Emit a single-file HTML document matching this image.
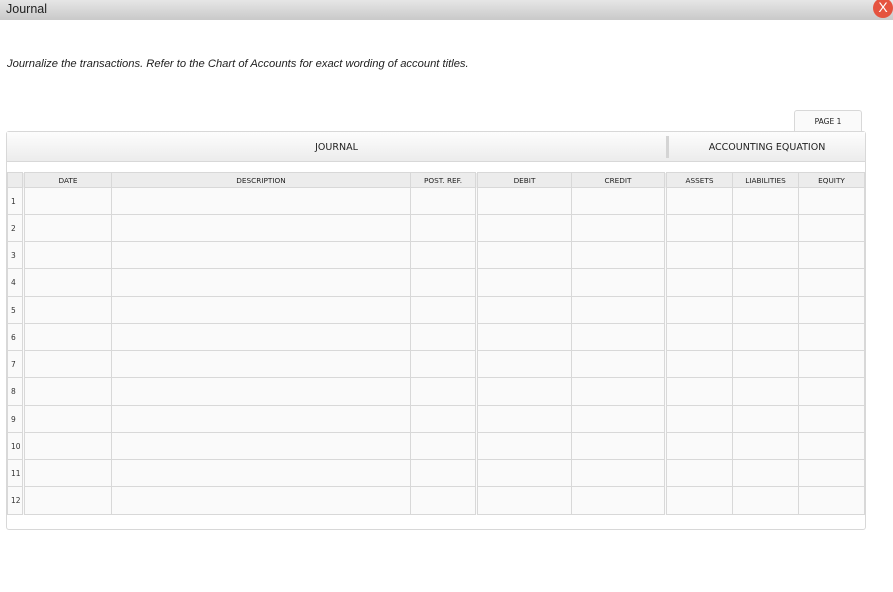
<!DOCTYPE html>
<html><head><meta charset="utf-8"><style>
*{margin:0;padding:0;box-sizing:border-box}
body{width:893px;height:592px;background:#fff;font-family:"Liberation Sans",Arial,sans-serif;position:relative;overflow:hidden}
.bar{position:absolute;left:0;top:0;width:893px;height:20px;background:linear-gradient(#e6e6e6,#c9c9c9);}
.bar span{position:absolute;left:6px;top:2px;font-size:12.5px;color:#222}
.x{position:absolute;left:873px;top:-2px;width:20px;height:20px;border-radius:50%;background:#e5533f;color:#fff;font-size:14px;text-align:center;line-height:18px}
.ins{position:absolute;left:7px;top:58px;font-size:11.2px;font-style:italic;color:#222}
.tab{position:absolute;left:794px;top:110px;width:68px;height:22px;border:1px solid #d8d8d8;border-bottom:none;border-radius:3px 3px 0 0;background:#fafafa;font-size:7.5px;text-align:center;line-height:22px;color:#222;font-family:"DejaVu Sans",sans-serif}
.panel{position:absolute;left:6px;top:131px;width:860px;height:399px;border:1px solid #d8d8d8;border-radius:3px;background:#fff}
.hdr{position:absolute;left:0;top:0;width:858px;height:30px;background:linear-gradient(#fdfdfd,#ececec);border-bottom:1px solid #d8d8d8;font-family:"DejaVu Sans",sans-serif;font-size:9.5px;color:#222}
.hdr .a{position:absolute;left:0;width:659px;top:1px;line-height:30px;text-align:center}
.hdr .b{position:absolute;left:659px;top:4px;width:3px;height:22px;background:#d4d4d4}
.hdr .c{position:absolute;left:662px;width:196px;top:1px;line-height:30px;text-align:center}
table{position:absolute;left:7px;top:172px;border-collapse:collapse;table-layout:fixed;width:857px;font-family:"DejaVu Sans",sans-serif}
td,th{border:1px solid #d8d8d8;background:#fafafa}
th{background:#ececec;font-weight:normal;font-size:7.3px;height:15px;color:#222}
td.n{font-size:7.5px;color:#333;padding-left:3px}
.g{border-left:3px double #d8d8d8}
</style></head><body>
<div class="bar"><span>Journal</span></div>
<div class="x">X</div>
<div class="ins">Journalize the transactions. Refer to the Chart of Accounts for exact wording of account titles.</div>
<div class="tab">PAGE 1</div>
<div class="panel"><div class="hdr"><div class="a">JOURNAL</div><div class="b"></div><div class="c">ACCOUNTING EQUATION</div></div></div>
<table>
<colgroup><col style="width:16px"><col style="width:88px"><col style="width:299px"><col style="width:66px"><col style="width:95px"><col style="width:94px"><col style="width:67px"><col style="width:66px"><col style="width:66px"></colgroup>
<tr><th></th><th class="g">DATE</th><th>DESCRIPTION</th><th>POST. REF.</th><th class="g">DEBIT</th><th>CREDIT</th><th class="g">ASSETS</th><th>LIABILITIES</th><th>EQUITY</th></tr>
<tr style="height:27px"><td class="n">1</td><td class="g"></td><td></td><td></td><td class="g"></td><td></td><td class="g"></td><td></td><td></td></tr>
<tr style="height:27px"><td class="n">2</td><td class="g"></td><td></td><td></td><td class="g"></td><td></td><td class="g"></td><td></td><td></td></tr>
<tr style="height:27px"><td class="n">3</td><td class="g"></td><td></td><td></td><td class="g"></td><td></td><td class="g"></td><td></td><td></td></tr>
<tr style="height:28px"><td class="n">4</td><td class="g"></td><td></td><td></td><td class="g"></td><td></td><td class="g"></td><td></td><td></td></tr>
<tr style="height:27px"><td class="n">5</td><td class="g"></td><td></td><td></td><td class="g"></td><td></td><td class="g"></td><td></td><td></td></tr>
<tr style="height:27px"><td class="n">6</td><td class="g"></td><td></td><td></td><td class="g"></td><td></td><td class="g"></td><td></td><td></td></tr>
<tr style="height:27px"><td class="n">7</td><td class="g"></td><td></td><td></td><td class="g"></td><td></td><td class="g"></td><td></td><td></td></tr>
<tr style="height:28px"><td class="n">8</td><td class="g"></td><td></td><td></td><td class="g"></td><td></td><td class="g"></td><td></td><td></td></tr>
<tr style="height:27px"><td class="n">9</td><td class="g"></td><td></td><td></td><td class="g"></td><td></td><td class="g"></td><td></td><td></td></tr>
<tr style="height:27px"><td class="n">10</td><td class="g"></td><td></td><td></td><td class="g"></td><td></td><td class="g"></td><td></td><td></td></tr>
<tr style="height:27px"><td class="n">11</td><td class="g"></td><td></td><td></td><td class="g"></td><td></td><td class="g"></td><td></td><td></td></tr>
<tr style="height:28px"><td class="n">12</td><td class="g"></td><td></td><td></td><td class="g"></td><td></td><td class="g"></td><td></td><td></td></tr>
</table>
</body></html>
